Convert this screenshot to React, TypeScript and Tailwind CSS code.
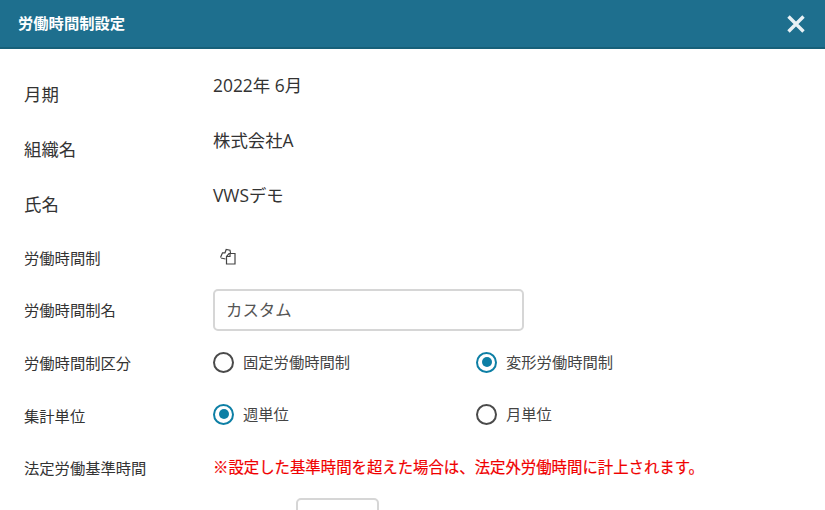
const FONT = "font-['Open_Sans','Noto_Sans_CJK_JP',sans-serif]";

const CopyIcon = () => (
  <svg width="18" height="18" viewBox="0 0 18 18" fill="none" stroke="#444" strokeWidth="1.2">
    <path d="M1.5 9.5 L3.5 4.8 L6 4.8 L7.2 1.5 L11 2.2 L11.5 5 M6.5 11 L2 10" fill="#fff" />
    <path d="M10 5.5 H16 V16 H7.5 V8.5 Z" fill="#fff" />
    <path d="M7.5 8.5 H11 V5.5" />
  </svg>
);

const Radio: React.FC<{ label: string; checked?: boolean; className?: string }> = ({ label, checked, className }) => (
  <div className={`flex items-center gap-[9px] w-[263px] ${className ?? ""}`}>
    {checked ? (
      <span className="w-[21px] h-[21px] rounded-full border-[2.5px] border-[#0d7fa5] flex items-center justify-center">
        <span className="w-[10px] h-[10px] rounded-full bg-[#0d7fa5]" />
      </span>
    ) : (
      <span className="w-[21px] h-[21px] rounded-full border-[2.5px] border-[#4a4a4a]" />
    )}
    <span className="text-[15.3px] text-[#444]">{label}</span>
  </div>
);

const Row: React.FC<{ label: string; big?: boolean; className?: string; children: React.ReactNode }> = ({
  label,
  big,
  className,
  children,
}) => (
  <div className={`flex items-center ${className ?? ""}`}>
    <div className={`w-[189px] shrink-0 ${big ? "text-[17.4px]" : "text-[15.3px]"} text-[#333]`}>{label}</div>
    {children}
  </div>
);

export default function App() {
  return (
    <div className={`w-[825px] h-[510px] overflow-hidden bg-white ${FONT}`}>
      <header className="h-[49px] bg-[#1e6f8e] border-b-2 border-[#176079] flex items-center justify-between pl-[18px] pr-[19px]">
        <h1 className="text-[15.3px] font-bold text-white">労働時間制設定</h1>
        <svg width="20" height="20" viewBox="0 0 20 20" stroke="#e8f1f5" strokeWidth="3.4">
          <path d="M2.5 2.5 L17.5 17.5 M17.5 2.5 L2.5 17.5" />
        </svg>
      </header>
      <div className="pl-[24px]">
        <Row label="月期" big className="h-[55px] mt-[18px]">
          <div className="text-[17.4px] text-[#333] -mt-[18px]">2022年 6月</div>
        </Row>
        <Row label="組織名" big className="h-[55px]">
          <div className="text-[17.4px] text-[#333] -mt-[18px]">株式会社A</div>
        </Row>
        <Row label="氏名" big className="h-[55px]">
          <div className="text-[17.4px] text-[#333] -mt-[18px]">VWSデモ</div>
        </Row>
        <Row label="労働時間制" className="h-[52px]">
          <div className="pl-[6px] -mt-[3px]">
            <CopyIcon />
          </div>
        </Row>
        <Row label="労働時間制名" className="h-[52px]">
          <div className="w-[311px] h-[42px] border-2 border-[#d6d6d6] rounded-[5px] flex items-center pl-[11px] pt-[1px] text-[16.4px] text-[#555]">
            カスタム
          </div>
        </Row>
        <Row label="労働時間制区分" className="h-[54px]">
          <Radio label="固定労働時間制" className="-mt-[2px]" />
          <Radio label="変形労働時間制" checked className="-mt-[2px]" />
        </Row>
        <Row label="集計単位" className="h-[52px]">
          <Radio label="週単位" checked className="-mt-[4px]" />
          <Radio label="月単位" className="-mt-[4px]" />
        </Row>
        <Row label="法定労働基準時間" className="h-[52px]">
          <div className="text-[15.4px] text-[#f00000] [-webkit-text-stroke:0.2px_#f00000]">※設定した基準時間を超えた場合は、法定外労働時間に計上されます。</div>
        </Row>
        <div className="ml-[272px] mt-[4px] w-[83px] h-[42px] border-2 border-[#d6d6d6] rounded-[5px]" />
      </div>
    </div>
  );
}
